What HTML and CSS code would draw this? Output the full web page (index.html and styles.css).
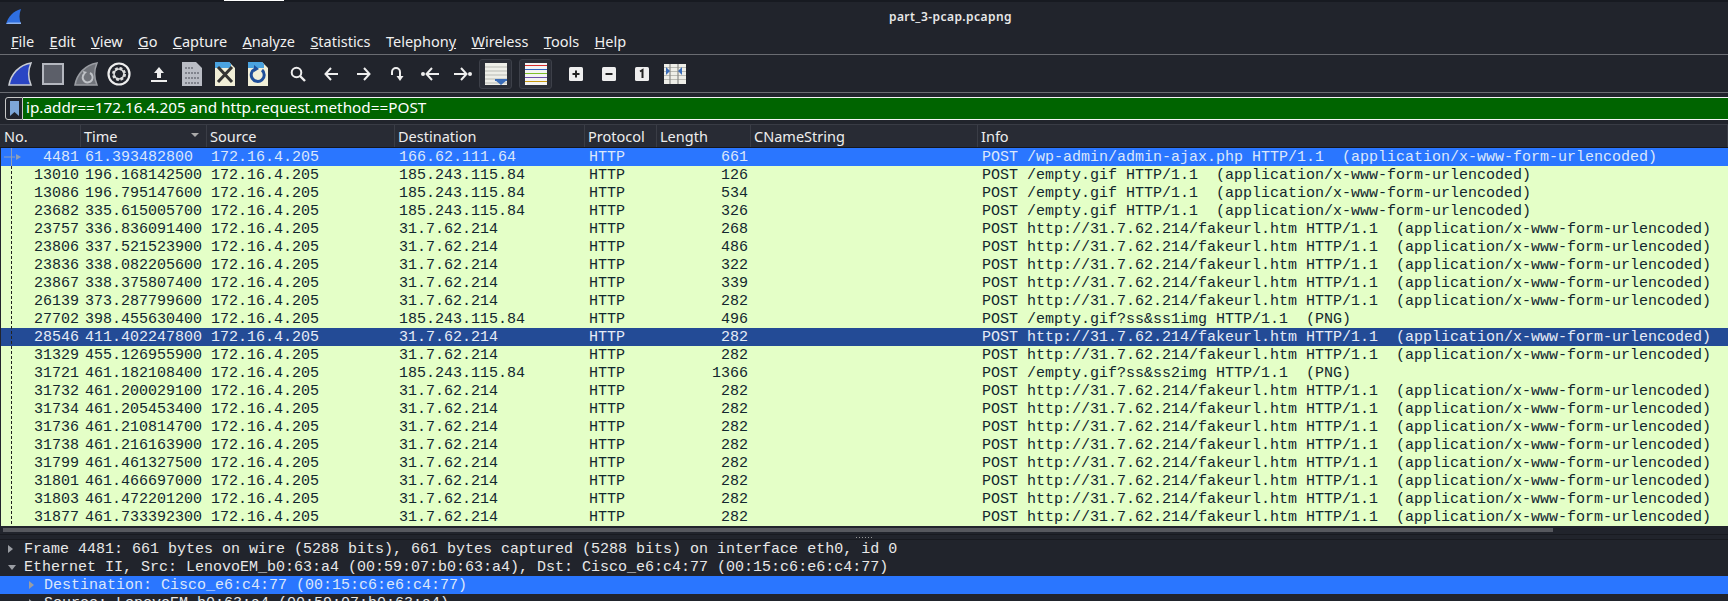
FILE: index.html
```html
<!DOCTYPE html>
<html lang="en">
<head>
  <meta charset="UTF-8" />
  <title>part_3-pcap.pcapng</title>
  <link rel="stylesheet" href="styles.css">
</head>
<body>
  <div class="window">
    <div class="title-bar">
      <div class="top-mark"></div>
      <svg class="app-icon" viewBox="0 0 17 17"><path d="M1 16C3 9 8 3 16 1c-2 5-2 10 0 15z" fill="#2f6fe0"/><path d="M1 16h15v-1.5H3z" fill="#8fb4ee"/></svg>
      <div class="title">part_3-pcap.pcapng</div>
    </div>

    <div class="menu-bar">
      <span class="menu-item"><u>F</u>ile</span>
      <span class="menu-item"><u>E</u>dit</span>
      <span class="menu-item"><u>V</u>iew</span>
      <span class="menu-item"><u>G</u>o</span>
      <span class="menu-item"><u>C</u>apture</span>
      <span class="menu-item"><u>A</u>nalyze</span>
      <span class="menu-item"><u>S</u>tatistics</span>
      <span class="menu-item">Telephon<u>y</u></span>
      <span class="menu-item"><u>W</u>ireless</span>
      <span class="menu-item"><u>T</u>ools</span>
      <span class="menu-item"><u>H</u>elp</span>
    </div>

    <div class="tool-bar">
      <div class="tool"><svg width="24" height="24" viewBox="0 0 24 24"><path d="M1 23C3 12 11 3 23 1c-3 7-3 15 0 22z" fill="#2a45c4" stroke="#c9ccd2" stroke-width="1.5"/></svg></div>
      <div class="tool"><svg width="22" height="22" viewBox="0 0 22 22"><rect x="1" y="1" width="20" height="20" fill="#5c5f69" stroke="#b4b7bf" stroke-width="2"/></svg></div>
      <div class="tool"><svg width="24" height="24" viewBox="0 0 24 24"><path d="M1 23C3 12 11 3 23 1c-3 7-3 15 0 22z" fill="#70737a" stroke="#9a9da3" stroke-width="1.5"/><path d="M10 12a5 5 0 1 0 6-1" fill="none" stroke="#c0c3c8" stroke-width="2"/><path d="M9 9l4 1-3 3z" fill="#c0c3c8"/></svg></div>
      <div class="tool"><svg width="24" height="24" viewBox="0 0 24 24"><circle cx="12" cy="12" r="10.5" fill="none" stroke="#eee" stroke-width="2.2"/><circle cx="12" cy="12" r="5.5" fill="none" stroke="#ddd" stroke-width="3" stroke-dasharray="2.6 1.7"/><circle cx="12" cy="12" r="5" fill="none" stroke="#ddd" stroke-width="1.6"/></svg></div>
      <div class="tool-sep"></div>
      <div class="tool"><svg width="16" height="16" viewBox="0 0 16 16"><path d="M8 1l5 6h-3v5H6V7H3z M0 14h16v2H0z" fill="#eee"/></svg></div>
      <div class="tool"><svg width="20" height="24" viewBox="0 0 20 24"><path d="M0 0h14l6 6v18H0z" fill="#b9bcc4"/><path d="M3 6h9M3 11h14M3 16h14M3 21h14" stroke="#80838c" stroke-width="2" stroke-dasharray="2 1"/></svg></div>
      <div class="tool"><svg width="20" height="24" viewBox="0 0 20 24"><path d="M0 0h14l6 6v18H0z" fill="#f1efd8"/><path d="M0 0h14l2 2v4H0z" fill="#4aa3e0"/><path d="M3 5l14 15M17 5L3 20" stroke="#333" stroke-width="3"/></svg></div>
      <div class="tool"><svg width="20" height="24" viewBox="0 0 20 24"><path d="M0 0h14l6 6v18H0z" fill="#f1efd8"/><path d="M0 0h14l2 2v4H0z" fill="#4aa3e0"/><path d="M7 7a6.500 6.500 0 1 0 7 1" fill="none" stroke="#1f4f9a" stroke-width="3"/><path d="M6 3l5 4-5 3z" fill="#1f4f9a"/></svg></div>
      <div class="tool-sep"></div>
      <div class="tool"><svg width="16" height="16" viewBox="0 0 16 16"><circle cx="6.500" cy="6.500" r="4.800" fill="none" stroke="#eee" stroke-width="2"/><path d="M10 10l5 5" stroke="#eee" stroke-width="2.400"/></svg></div>
      <div class="tool"><svg width="14" height="14" viewBox="0 0 14 14"><path d="M7 1L1.500 7 7 13M2 7h12" fill="none" stroke="#eee" stroke-width="2"/></svg></div>
      <div class="tool"><svg width="14" height="14" viewBox="0 0 14 14"><path d="M7 1l5.500 6L7 13M12 7H0" fill="none" stroke="#eee" stroke-width="2"/></svg></div>
      <div class="tool"><svg width="14" height="16" viewBox="0 0 14 16"><path d="M2 9V6a4 4 0 0 1 8 0v4" fill="none" stroke="#eee" stroke-width="2"/><path d="M6.500 10h7L10 15z" fill="#eee"/></svg></div>
      <div class="tool"><svg width="18" height="14" viewBox="0 0 18 14"><circle cx="2" cy="7" r="2" fill="#eee"/><path d="M11 1L5.500 7l5.500 6M6 7h12" fill="none" stroke="#eee" stroke-width="2"/></svg></div>
      <div class="tool"><svg width="18" height="14" viewBox="0 0 18 14"><circle cx="16" cy="7" r="2" fill="#eee"/><path d="M7 1l5.500 6L7 13M12 7H0" fill="none" stroke="#eee" stroke-width="2"/></svg></div>
      <div class="tool tool-on"><svg width="22" height="22" viewBox="0 0 22 22"><rect width="22" height="22" fill="#eeeee8"/><path d="M0 4h22M0 8h22M0 12h22M0 16h22M0 20h22" stroke="#b9bab4" stroke-width="1"/><path d="M10 17h12l-6 5z" fill="#3a6cb8"/><rect x="10" y="16" width="12" height="2" fill="#3a6cb8"/></svg></div>
      <div class="tool-sep"></div>
      <div class="tool tool-on"><svg width="22" height="22" viewBox="0 0 22 22"><rect width="22" height="22" fill="#f3f3f3"/><path d="M0 2.500h22" stroke="#d82c2c"/><path d="M0 6.500h22" stroke="#2b5fc0"/><path d="M0 10.500h22" stroke="#7fc02a"/><path d="M0 14.500h22" stroke="#6a4fa8"/><path d="M0 18.500h22" stroke="#c89a10"/></svg></div>
      <div class="tool-sep"></div>
      <div class="tool"><svg width="14" height="14" viewBox="0 0 14 14"><rect width="14" height="14" rx="1.500" fill="#eee"/><path d="M7 3.500v7M3.500 7h7" stroke="#222" stroke-width="2"/></svg></div>
      <div class="tool"><svg width="14" height="14" viewBox="0 0 14 14"><rect width="14" height="14" rx="1.500" fill="#eee"/><path d="M3.500 7h7" stroke="#222" stroke-width="2"/></svg></div>
      <div class="tool"><svg width="14" height="14" viewBox="0 0 14 14"><rect width="14" height="14" rx="1.500" fill="#eee"/><path d="M5 4.500L7.500 3v8" fill="none" stroke="#222" stroke-width="2"/></svg></div>
      <div class="tool"><svg width="22" height="20" viewBox="0 0 22 20"><rect width="22" height="20" fill="#eeeee8"/><path d="M0 3.500h22M0 7.500h22M0 11.500h22M0 15.500h22" stroke="#b9bab4"/><path d="M6 0v20M14 0v20" stroke="#8a8b88" stroke-width="1.200"/><path d="M2 3l4 4-4 4zM18 3l-4 4 4 4z" fill="#3a6cb8"/></svg></div>
    </div>

    <div class="filter-bar">
      <div class="bookmark"><svg width="9" height="15" viewBox="0 0 9 15"><path d="M0 0h9v15L4.500 11 0 15z" fill="#7da7d9"/></svg></div>
      <div class="filter-input">ip.addr==172.16.4.205 and http.request.method==POST</div>
    </div>

    <div class="packet-list">
      <div class="list-head">
        <div class="head-cell">No.</div>
        <div class="head-cell sorted">Time</div>
        <div class="head-cell">Source</div>
        <div class="head-cell">Destination</div>
        <div class="head-cell">Protocol</div>
        <div class="head-cell">Length</div>
        <div class="head-cell">CNameString</div>
        <div class="head-cell">Info</div>
      </div>
      <div class="rows">
        <div class="row current"><span class="num">4481</span><span>61.393482800</span><span>172.16.4.205</span><span>166.62.111.64</span><span>HTTP</span><span class="num">661</span><span></span><span>POST /wp-admin/admin-ajax.php HTTP/1.1  (application/x-www-form-urlencoded)</span></div>
        <div class="row"><span class="num">13010</span><span>196.168142500</span><span>172.16.4.205</span><span>185.243.115.84</span><span>HTTP</span><span class="num">126</span><span></span><span>POST /empty.gif HTTP/1.1  (application/x-www-form-urlencoded)</span></div>
        <div class="row"><span class="num">13086</span><span>196.795147600</span><span>172.16.4.205</span><span>185.243.115.84</span><span>HTTP</span><span class="num">534</span><span></span><span>POST /empty.gif HTTP/1.1  (application/x-www-form-urlencoded)</span></div>
        <div class="row"><span class="num">23682</span><span>335.615005700</span><span>172.16.4.205</span><span>185.243.115.84</span><span>HTTP</span><span class="num">326</span><span></span><span>POST /empty.gif HTTP/1.1  (application/x-www-form-urlencoded)</span></div>
        <div class="row"><span class="num">23757</span><span>336.836091400</span><span>172.16.4.205</span><span>31.7.62.214</span><span>HTTP</span><span class="num">268</span><span></span><span>POST http://31.7.62.214/fakeurl.htm HTTP/1.1  (application/x-www-form-urlencoded)</span></div>
        <div class="row"><span class="num">23806</span><span>337.521523900</span><span>172.16.4.205</span><span>31.7.62.214</span><span>HTTP</span><span class="num">486</span><span></span><span>POST http://31.7.62.214/fakeurl.htm HTTP/1.1  (application/x-www-form-urlencoded)</span></div>
        <div class="row"><span class="num">23836</span><span>338.082205600</span><span>172.16.4.205</span><span>31.7.62.214</span><span>HTTP</span><span class="num">322</span><span></span><span>POST http://31.7.62.214/fakeurl.htm HTTP/1.1  (application/x-www-form-urlencoded)</span></div>
        <div class="row"><span class="num">23867</span><span>338.375807400</span><span>172.16.4.205</span><span>31.7.62.214</span><span>HTTP</span><span class="num">339</span><span></span><span>POST http://31.7.62.214/fakeurl.htm HTTP/1.1  (application/x-www-form-urlencoded)</span></div>
        <div class="row"><span class="num">26139</span><span>373.287799600</span><span>172.16.4.205</span><span>31.7.62.214</span><span>HTTP</span><span class="num">282</span><span></span><span>POST http://31.7.62.214/fakeurl.htm HTTP/1.1  (application/x-www-form-urlencoded)</span></div>
        <div class="row"><span class="num">27702</span><span>398.455630400</span><span>172.16.4.205</span><span>185.243.115.84</span><span>HTTP</span><span class="num">496</span><span></span><span>POST /empty.gif?ss&amp;ss1img HTTP/1.1  (PNG)</span></div>
        <div class="row selected"><span class="num">28546</span><span>411.402247800</span><span>172.16.4.205</span><span>31.7.62.214</span><span>HTTP</span><span class="num">282</span><span></span><span>POST http://31.7.62.214/fakeurl.htm HTTP/1.1  (application/x-www-form-urlencoded)</span></div>
        <div class="row"><span class="num">31329</span><span>455.126955900</span><span>172.16.4.205</span><span>31.7.62.214</span><span>HTTP</span><span class="num">282</span><span></span><span>POST http://31.7.62.214/fakeurl.htm HTTP/1.1  (application/x-www-form-urlencoded)</span></div>
        <div class="row"><span class="num">31721</span><span>461.182108400</span><span>172.16.4.205</span><span>185.243.115.84</span><span>HTTP</span><span class="num">1366</span><span></span><span>POST /empty.gif?ss&amp;ss2img HTTP/1.1  (PNG)</span></div>
        <div class="row"><span class="num">31732</span><span>461.200029100</span><span>172.16.4.205</span><span>31.7.62.214</span><span>HTTP</span><span class="num">282</span><span></span><span>POST http://31.7.62.214/fakeurl.htm HTTP/1.1  (application/x-www-form-urlencoded)</span></div>
        <div class="row"><span class="num">31734</span><span>461.205453400</span><span>172.16.4.205</span><span>31.7.62.214</span><span>HTTP</span><span class="num">282</span><span></span><span>POST http://31.7.62.214/fakeurl.htm HTTP/1.1  (application/x-www-form-urlencoded)</span></div>
        <div class="row"><span class="num">31736</span><span>461.210814700</span><span>172.16.4.205</span><span>31.7.62.214</span><span>HTTP</span><span class="num">282</span><span></span><span>POST http://31.7.62.214/fakeurl.htm HTTP/1.1  (application/x-www-form-urlencoded)</span></div>
        <div class="row"><span class="num">31738</span><span>461.216163900</span><span>172.16.4.205</span><span>31.7.62.214</span><span>HTTP</span><span class="num">282</span><span></span><span>POST http://31.7.62.214/fakeurl.htm HTTP/1.1  (application/x-www-form-urlencoded)</span></div>
        <div class="row"><span class="num">31799</span><span>461.461327500</span><span>172.16.4.205</span><span>31.7.62.214</span><span>HTTP</span><span class="num">282</span><span></span><span>POST http://31.7.62.214/fakeurl.htm HTTP/1.1  (application/x-www-form-urlencoded)</span></div>
        <div class="row"><span class="num">31801</span><span>461.466697000</span><span>172.16.4.205</span><span>31.7.62.214</span><span>HTTP</span><span class="num">282</span><span></span><span>POST http://31.7.62.214/fakeurl.htm HTTP/1.1  (application/x-www-form-urlencoded)</span></div>
        <div class="row"><span class="num">31803</span><span>461.472201200</span><span>172.16.4.205</span><span>31.7.62.214</span><span>HTTP</span><span class="num">282</span><span></span><span>POST http://31.7.62.214/fakeurl.htm HTTP/1.1  (application/x-www-form-urlencoded)</span></div>
        <div class="row"><span class="num">31877</span><span>461.733392300</span><span>172.16.4.205</span><span>31.7.62.214</span><span>HTTP</span><span class="num">282</span><span></span><span>POST http://31.7.62.214/fakeurl.htm HTTP/1.1  (application/x-www-form-urlencoded)</span></div>
        <svg class="related-mark" width="20" height="378" viewBox="0 0 20 378"><path d="M3 9h11" stroke="#8fa0b8"/><path d="M15 6l5 3-5 3z" fill="#8fa0b8"/><path d="M10.500 0v18" stroke="#8fa0b8"/><path d="M10.500 18v360" stroke="#222" stroke-dasharray="3 2"/></svg>
      </div>
      <div class="h-scroll"><div class="h-thumb"></div></div>
    </div>

    <div class="splitter"><span class="grip"></span></div>

    <div class="details">
      <div class="tree-row"><span class="arrow closed"></span>Frame 4481: 661 bytes on wire (5288 bits), 661 bytes captured (5288 bits) on interface eth0, id 0</div>
      <div class="tree-row"><span class="arrow open"></span>Ethernet II, Src: LenovoEM_b0:63:a4 (00:59:07:b0:63:a4), Dst: Cisco_e6:c4:77 (00:15:c6:e6:c4:77)</div>
      <div class="tree-row child active"><span class="arrow closed"></span>Destination: Cisco_e6:c4:77 (00:15:c6:e6:c4:77)</div>
      <div class="tree-row child"><span class="arrow closed"></span>Source: LenovoEM_b0:63:a4 (00:59:07:b0:63:a4)</div>
    </div>
  </div>
</body>
</html>
```
FILE: styles.css
```css
* { box-sizing: border-box; }
html, body {
  margin: 0;
  height: 100%;
  overflow: hidden;
}
body {
  background: #21242c;
  color: #eee;
  font-family: 'Noto Sans', sans-serif;
}
.window {
  height: 601px;
  overflow: hidden;
  display: flex;
  flex-direction: column;
}

.title-bar {
  position: relative;
  flex: none;
  height: 28px;
  border-top: 2px solid #171a21;
  padding-top: 2px;
  display: flex;
  align-items: center;
  justify-content: center;
}
.top-mark {
  position: absolute;
  top: -2px;
  left: 224px;
  width: 60px;
  height: 1px;
  background: #fff;
}
.app-icon {
  position: absolute;
  left: 5px;
  top: 6px;
  width: 17px;
  height: 17px;
}
.title {
  font-size: 12px;
  font-weight: 600;
  letter-spacing: 0.45px;
  color: #e8e8e8;
  padding-left: 173px;
}

.menu-bar {
  flex: none;
  height: 27px;
  border-bottom: 1px solid #6a6c72;
  display: flex;
  align-items: center;
  padding-left: 11px;
  gap: 15.4px;
  font-size: 14.5px;
}
.menu-item { color: #f0f0f0; }

.tool-bar {
  flex: none;
  height: 38px;
  border-bottom: 1px solid #6a6c72;
  display: flex;
  align-items: center;
  padding-left: 3px;
}
.tool {
  flex: none;
  width: 33px;
  height: 30px;
  display: flex;
  align-items: center;
  justify-content: center;
}
.tool-on {
  background: #2b2e37;
  border: 1px solid #3d4049;
  border-radius: 3px;
}
.tool-sep {
  flex: none;
  width: 7px;
}

.filter-bar {
  flex: none;
  height: 31px;
  padding: 4px 0 4px 5px;
  display: flex;
}
.bookmark {
  flex: none;
  width: 18px;
  height: 23px;
  border: 1px solid #c8c8c8;
  border-radius: 3px 0 0 3px;
  display: flex;
  align-items: center;
  justify-content: center;
}
.filter-input {
  flex: 1;
  height: 23px;
  background: #006400;
  border-top: 1px solid #f4f4f4;
  border-bottom: 1px solid #f4f4f4;
  padding-left: 3px;
  font-size: 15.3px;
  line-height: 19px;
  color: #fff;
}

.packet-list {
  flex: none;
  padding-left: 1px;
}
.list-head, .row {
  display: grid;
  grid-template-columns: 80px 126px 188px 190px 72px 94px 227px 1fr;
}
.list-head {
  height: 24px;
  background: #282b34;
  border-top: 1px solid #393c45;
  border-bottom: 1px solid #15171c;
  margin-left: -1px;
  padding-left: 1px;
}
.head-cell {
  position: relative;
  padding-left: 3px;
  font-size: 14.5px;
  line-height: 22px;
  color: #eee;
  border-right: 1px solid #3a3d46;
}
.sorted::after {
  content: "";
  position: absolute;
  right: 7px;
  top: 8px;
  border-left: 4px solid transparent;
  border-right: 4px solid transparent;
  border-top: 4px solid #aaa;
}

.rows { position: relative; }
.row {
  height: 18px;
  background: #e4ffc7;
  color: #12272e;
  font-family: 'Liberation Mono', monospace;
  font-size: 15px;
  line-height: 19px;
  white-space: pre;
}
.row span {
  padding-left: 4px;
}
.row span.num {
  padding: 0 3px 0 0;
  text-align: right;
}
.row span.num:first-child {
  padding-right: 2px;
}
.row.current {
  background: #2a76ff;
  color: #dbe7fb;
}
.row.selected {
  background: #234b96;
  color: #e6ecf6;
}
.related-mark {
  position: absolute;
  left: 0;
  top: 0;
}

.h-scroll {
  height: 9px;
  margin-left: -1px;
  padding: 2px 0 2px 3px;
  border-bottom: 1px solid #181a20;
}
.h-thumb {
  width: 1550px;
  height: 4px;
  background: #56585e;
}

.splitter {
  flex: none;
  height: 5px;
  border-bottom: 1px solid #181a20;
  display: flex;
  justify-content: center;
  align-items: center;
}
.grip {
  width: 16px;
  height: 1px;
  background: repeating-linear-gradient(90deg, #999 0 1px, transparent 1px 3px);
}

.details {
  flex: 1;
  font-family: 'Liberation Mono', monospace;
  font-size: 15px;
  line-height: 19px;
  color: #e8e8e8;
}
.tree-row {
  height: 18px;
  padding-left: 24px;
  position: relative;
  white-space: pre;
}
.tree-row.child { padding-left: 44px; }
.tree-row.active {
  background: #2a76ff;
  color: #dbe7fb;
}
.arrow {
  position: absolute;
  left: 8px;
  top: 5px;
  width: 0;
  height: 0;
}
.child .arrow { left: 29px; }
.arrow.closed {
  border-top: 4px solid transparent;
  border-bottom: 4px solid transparent;
  border-left: 5px solid #9a9da3;
}
.arrow.open {
  top: 7px;
  border-left: 4px solid transparent;
  border-right: 4px solid transparent;
  border-top: 5px solid #9a9da3;
}
```
